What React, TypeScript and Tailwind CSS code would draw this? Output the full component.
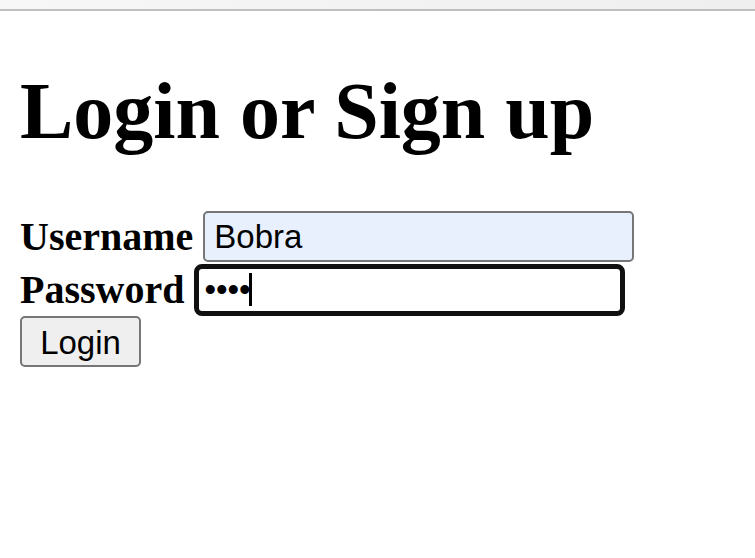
import React from "react";

export default function App() {
  return (
    <div className="min-h-[558px] bg-white">
      {/* browser chrome strip */}
      <div className="h-[11px] border-b-2 border-[#bfbfbf] bg-gradient-to-r from-[#f7f7f7] to-[#efefef]" />

      <div className="px-[20px] pt-[54px]">
        <h1 className="m-0 mb-[53px] font-['Liberation_Serif',serif] text-[80px] font-bold leading-[92px] text-black">
          Login or Sign up
        </h1>

        <form onSubmit={(e) => e.preventDefault()}>
          <div className="flex h-[53px] items-center gap-[10px]">
            <label className="font-['Liberation_Serif',serif] text-[40px] font-bold leading-[46px] text-black">
              Username
            </label>
            <input
              readOnly
              value="Bobra"
              className="h-[51px] w-[431px] rounded-[5px] border-2 border-[#767676] bg-[#e8f0fe] pl-[9px] font-['Liberation_Sans',Arial,sans-serif] text-[33px] text-black outline-none"
            />
          </div>

          <div className="flex h-[53px] items-center gap-[10px]">
            <label className="font-['Liberation_Serif',serif] text-[40px] font-bold leading-[46px] text-black">
              Password
            </label>
            <div className="flex h-[52px] w-[431px] items-center rounded-[8px] border-[5px] border-[#101010] bg-white pl-[5px] font-['Liberation_Sans',Arial,sans-serif] text-[33px] text-black">
              <span>••••</span>
              <span className="ml-[-2px] h-[33px] w-[3px] bg-black" />
            </div>
          </div>

          <button
            type="submit"
            className="h-[51px] w-[121px] rounded-[5px] border-2 border-[#767676] bg-[#efefef] font-['Liberation_Sans',Arial,sans-serif] text-[33px] text-black"
          >
            Login
          </button>
        </form>
      </div>
    </div>
  );
}
